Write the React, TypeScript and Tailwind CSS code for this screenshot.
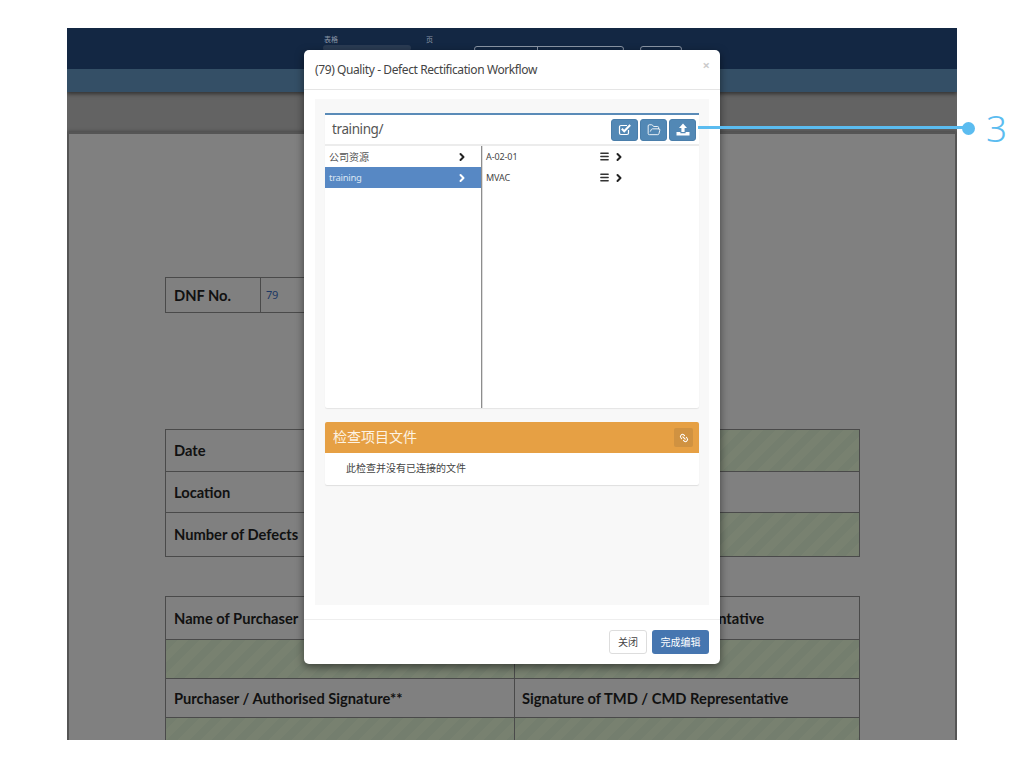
import { ChevronRight, FolderOpen, Link2, Menu } from "lucide-react";

const sans = "font-['Noto_Sans','Noto_Sans_CJK_SC',sans-serif]";
const hatch =
  "bg-[repeating-linear-gradient(135deg,#747e6e_0px,#747e6e_8px,#788170_8px,#788170_16px)]";

function Row({ h, border = true, children }: { h: string; border?: boolean; children: React.ReactNode }) {
  return <div className={`flex ${h} ${border ? "border-b border-[#4a4a4a]" : ""}`}>{children}</div>;
}

function Label({ children, className = "" }: { children?: React.ReactNode; className?: string }) {
  return (
    <div className={`flex items-center pl-[8px] font-['Lato',sans-serif] text-[14.7px] font-bold text-[#111] ${className}`}>
      {children}
    </div>
  );
}

function Background() {
  return (
    <div className="h-[712px] w-[890px] overflow-hidden bg-[#636363]">
      <div className="relative h-[41px] bg-[#132743]">
        <div className="absolute left-[257px] top-[7px] text-[7px] text-[#8a95a5]">表格</div>
        <div className="absolute left-[359px] top-[7px] text-[7px] text-[#8a95a5]">页</div>
        <div className="absolute left-[256px] top-[17px] h-[6px] w-[88px] rounded-sm bg-[#2a3b53]" />
        <div className="absolute left-[407px] top-[18px] flex h-[6px] w-[150px] rounded-sm border border-[#8a95a5]">
          <div className="w-[63px] border-r border-[#8a95a5]" />
        </div>
        <div className="absolute left-[573px] top-[18px] h-[6px] w-[42px] rounded-sm border border-[#8a95a5]" />
      </div>
      <div className="h-[23px] bg-[#344f66] shadow-[0_2px_4px_rgba(0,0,0,0.5)]" />
      <div className="h-[40px]" />
      <div className="h-[608px] border-x-2 border-t-2 border-[#555] bg-[#808080] pl-[96px] pr-[95px] pt-[143px] shadow-[0_0_4px_rgba(0,0,0,0.4)]">
        <div className="flex h-[36px] w-[201px] border border-[#4a4a4a]">
          <Label className="w-[95px] border-r border-[#4a4a4a]">DNF No.</Label>
          <div className="flex items-center px-[5px] text-[11px] tracking-[-0.3px] text-[#1c3763]">79</div>
        </div>
        <div className="mt-[116px] border border-[#4a4a4a]">
          <Row h="h-[42px]">
            <Label className="w-[349px] border-r border-[#4a4a4a]">Date</Label>
            <div className={`flex-1 ${hatch}`} />
          </Row>
          <Row h="h-[41px]">
            <Label className="w-[349px] border-r border-[#4a4a4a]">Location</Label>
            <div className="flex-1" />
          </Row>
          <Row h="h-[43px]" border={false}>
            <Label className="w-[349px] border-r border-[#4a4a4a]">Number of Defects</Label>
            <div className={`flex-1 ${hatch}`} />
          </Row>
        </div>
        <div className="mt-[39px] border border-[#4a4a4a]">
          <Row h="h-[43px]">
            <Label className="w-[349px] border-r border-[#4a4a4a]">Name of Purchaser</Label>
            <Label className="flex-1 justify-end pr-[95px]">ntative</Label>
          </Row>
          <Row h="h-[39px]">
            <div className={`w-[349px] border-r border-[#4a4a4a] ${hatch}`} />
            <div className={`flex-1 ${hatch}`} />
          </Row>
          <Row h="h-[39px]">
            <Label className="w-[349px] border-r border-[#4a4a4a]">Purchaser / Authorised Signature**</Label>
            <Label className="flex-1 !pl-[7px]">Signature of TMD / CMD Representative</Label>
          </Row>
          <Row h="h-[40px]" border={false}>
            <div className={`w-[349px] border-r border-[#4a4a4a] ${hatch}`} />
            <div className={`flex-1 ${hatch}`} />
          </Row>
        </div>
      </div>
    </div>
  );
}

function ToolButton({ children }: { children: React.ReactNode }) {
  return (
    <button className="flex h-[22px] w-[27px] items-center justify-center rounded-[3px] border border-[#4a7eaa] bg-[#5288b5] text-white">
      {children}
    </button>
  );
}

function CheckBoxIcon() {
  return (
    <svg width="14" height="13" viewBox="0 0 14 13" fill="none" stroke="currentColor">
      <path d="M10.5 7v3a1.5 1.5 0 0 1-1.5 1.5H3A1.5 1.5 0 0 1 1.5 10V4A1.5 1.5 0 0 1 3 2.5h6" strokeWidth="1.2" />
      <path d="M3.8 5.8 6.2 8.2 12.2 2" strokeWidth="2" />
    </svg>
  );
}

function UploadIcon() {
  return (
    <svg width="14" height="13" viewBox="0 0 14 13" fill="currentColor">
      <path d="M7 0.5 11 5H8.6V9H5.4V5H3Z" />
      <path d="M0.5 9H4.4V10.2H9.6V9H13.5V12.5H0.5Z" />
    </svg>
  );
}

function Modal() {
  return (
    <div className="flex h-[614px] w-[416px] flex-col rounded-[5px] bg-white shadow-[0_3px_9px_rgba(0,0,0,0.5)]">
      <div className="relative flex h-[40px] shrink-0 items-center border-b border-[#e5e5e5] px-[11px]">
        <span className="text-[12px] tracking-[-0.4px] text-[#444]">(79) Quality - Defect Rectification Workflow</span>
        <span className="absolute right-[10px] top-[9px] text-[13px] leading-none font-bold text-[#ccc]">×</span>
      </div>
      <div className="px-[11px] pt-[9px]">
        <div className="h-[506px] bg-[#f8f8f8] px-[10px] pt-[14px]">
          {/* browser */}
          <div className="rounded-b-[2px] bg-white shadow-[0_1px_1px_rgba(0,0,0,0.08)]">
            <div className="flex h-[33px] items-center justify-between border-b-2 border-t-2 border-b-[#ececec] border-t-[#5a8bb8] pl-[7px] pr-[3px]">
              <span className="text-[13.5px] tracking-[-0.4px] text-[#555]">training/</span>
              <div className="flex gap-[2px]">
                <ToolButton>
                  <CheckBoxIcon />
                </ToolButton>
                <ToolButton>
                  <FolderOpen size={14} strokeWidth={1.5} />
                </ToolButton>
                <ToolButton>
                  <UploadIcon />
                </ToolButton>
              </div>
            </div>
            <div className="flex h-[262px]">
              <div className="w-[157px] shrink-0 border-r border-[#8d8d8d]">
                <div className="flex h-[21px] items-center justify-between pl-[4px] pr-[13px] pt-[1px] text-[10px] text-[#555]">
                  <span>公司资源</span>
                  <ChevronRight size={12} strokeWidth={4} className="text-[#222]" />
                </div>
                <div className="flex h-[21px] items-center justify-between bg-[#5788c4] pl-[4px] pr-[13px] text-[9.5px] tracking-[-0.3px] text-[#dbe6f3]">
                  <span className="pt-[2px]">training</span>
                  <ChevronRight size={12} strokeWidth={4} className="text-white" />
                </div>
              </div>
              <div className="flex-1 border-l border-[#dcdcdc]">
                {["A-02-01", "MVAC"].map((name) => (
                  <div key={name} className="flex h-[21px] w-[142px] items-center pl-[3px] text-[9px] tracking-[-0.1px] text-[#444]">
                    <span className="flex-1">{name}</span>
                    <Menu size={11} strokeWidth={3} className="text-[#333]" />
                    <ChevronRight size={12} strokeWidth={4} className="ml-[3px] text-[#222]" />
                  </div>
                ))}
              </div>
            </div>
          </div>
          {/* linked files */}
          <div className="mt-[14px] rounded-[2px] bg-white shadow-[0_1px_1px_rgba(0,0,0,0.1)]">
            <div className="flex h-[31px] items-center justify-between rounded-t-[2px] bg-[#e6a044] pl-[8px] pr-[6px]">
              <span className="pb-[2px] text-[14px] text-[#fdf3e3]">检查项目文件</span>
              <span className="flex h-[19px] w-[19px] items-center justify-center rounded-[2px] bg-[#d09241] text-white">
                <Link2 size={10} strokeWidth={2.5} className="rotate-45" />
              </span>
            </div>
            <div className="flex h-[32px] items-center pb-[2px] pl-[21px] text-[10px] text-[#444]">此检查并没有已连接的文件</div>
          </div>
        </div>
      </div>
      <div className="mt-[14px] flex flex-1 items-center justify-end gap-[5px] border-t border-[#eee] pr-[11px]">
        <button className="h-[24px] w-[38px] rounded-[3px] border border-[#ddd] bg-white text-[10px] text-[#444]">关闭</button>
        <button className="h-[24px] w-[57px] rounded-[3px] bg-[#4676b0] text-[10px] text-white">完成编辑</button>
      </div>
    </div>
  );
}

export default function App() {
  return (
    <div className={`relative h-[768px] w-[1024px] overflow-hidden bg-white pl-[67px] pt-[28px] ${sans}`}>
      <Background />
      <div className="absolute left-[304px] top-[50px]">
        <Modal />
      </div>
      {/* callout */}
      <div className="absolute left-[698px] top-[126px] h-[3px] w-[270px] bg-[#5bbcf0]" />
      <div className="absolute left-[962px] top-[122px] h-[13px] w-[13px] rounded-full bg-[#5bbcf0]" />
      <div className="absolute left-[986px] top-[106px] text-[37px] leading-[44px] font-light text-[#5bbcf0]">3</div>
    </div>
  );
}
